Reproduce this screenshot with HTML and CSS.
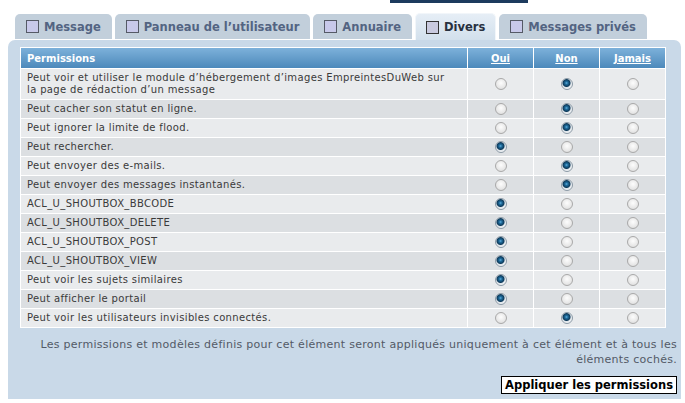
FILE: index.html
```html
<!DOCTYPE html>
<html lang="fr">
<head>
  <meta charset="UTF-8">
  <title>Permissions</title>
  <link rel="stylesheet" href="styles.css">
</head>
<body>
  <div class="topbar"></div>
  <ul class="tabs">
    <li class="tab"><span class="box"></span>Message</li>
    <li class="tab"><span class="box"></span>Panneau de l’utilisateur</li>
    <li class="tab"><span class="box"></span>Annuaire</li>
    <li class="tab active"><span class="box"></span>Divers</li>
    <li class="tab"><span class="box"></span>Messages privés</li>
  </ul>
  <div class="panel">
    <table class="perms">
      <thead>
        <tr>
          <th class="name">Permissions</th>
          <th><a href="#">Oui</a></th>
          <th><a href="#">Non</a></th>
          <th><a href="#">Jamais</a></th>
        </tr>
      </thead>
      <tbody>
        <tr class="row1">
          <td class="name">Peut voir et utiliser le module d’hébergement d’images EmpreintesDuWeb sur la page de rédaction d’un message</td>
          <td><input type="radio" name="p1"></td>
          <td><input type="radio" name="p1" checked></td>
          <td><input type="radio" name="p1"></td>
        </tr>
        <tr class="row2">
          <td class="name">Peut cacher son statut en ligne.</td>
          <td><input type="radio" name="p2"></td>
          <td><input type="radio" name="p2" checked></td>
          <td><input type="radio" name="p2"></td>
        </tr>
        <tr class="row1">
          <td class="name">Peut ignorer la limite de flood.</td>
          <td><input type="radio" name="p3"></td>
          <td><input type="radio" name="p3" checked></td>
          <td><input type="radio" name="p3"></td>
        </tr>
        <tr class="row2">
          <td class="name">Peut rechercher.</td>
          <td><input type="radio" name="p4" checked></td>
          <td><input type="radio" name="p4"></td>
          <td><input type="radio" name="p4"></td>
        </tr>
        <tr class="row1">
          <td class="name">Peut envoyer des e-mails.</td>
          <td><input type="radio" name="p5"></td>
          <td><input type="radio" name="p5" checked></td>
          <td><input type="radio" name="p5"></td>
        </tr>
        <tr class="row2">
          <td class="name">Peut envoyer des messages instantanés.</td>
          <td><input type="radio" name="p6"></td>
          <td><input type="radio" name="p6" checked></td>
          <td><input type="radio" name="p6"></td>
        </tr>
        <tr class="row1">
          <td class="name">ACL_U_SHOUTBOX_BBCODE</td>
          <td><input type="radio" name="p7" checked></td>
          <td><input type="radio" name="p7"></td>
          <td><input type="radio" name="p7"></td>
        </tr>
        <tr class="row2">
          <td class="name">ACL_U_SHOUTBOX_DELETE</td>
          <td><input type="radio" name="p8" checked></td>
          <td><input type="radio" name="p8"></td>
          <td><input type="radio" name="p8"></td>
        </tr>
        <tr class="row1">
          <td class="name">ACL_U_SHOUTBOX_POST</td>
          <td><input type="radio" name="p9" checked></td>
          <td><input type="radio" name="p9"></td>
          <td><input type="radio" name="p9"></td>
        </tr>
        <tr class="row2">
          <td class="name">ACL_U_SHOUTBOX_VIEW</td>
          <td><input type="radio" name="p10" checked></td>
          <td><input type="radio" name="p10"></td>
          <td><input type="radio" name="p10"></td>
        </tr>
        <tr class="row1">
          <td class="name">Peut voir les sujets similaires</td>
          <td><input type="radio" name="p11" checked></td>
          <td><input type="radio" name="p11"></td>
          <td><input type="radio" name="p11"></td>
        </tr>
        <tr class="row2">
          <td class="name">Peut afficher le portail</td>
          <td><input type="radio" name="p12" checked></td>
          <td><input type="radio" name="p12"></td>
          <td><input type="radio" name="p12"></td>
        </tr>
        <tr class="row1">
          <td class="name">Peut voir les utilisateurs invisibles connectés.</td>
          <td><input type="radio" name="p13"></td>
          <td><input type="radio" name="p13" checked></td>
          <td><input type="radio" name="p13"></td>
        </tr>
      </tbody>
    </table>
    <p class="note">Les permissions et modèles définis pour cet élément seront appliqués uniquement à cet élément et à tous les éléments cochés.</p>
    <div class="actions">
      <button class="apply">Appliquer les permissions</button>
    </div>
  </div>
</body>
</html>
```

FILE: styles.css
```css
body {
  margin: 0;
  background: #fff;
  font-family: "DejaVu Sans", Verdana, sans-serif;
  color: #333;
}
.topbar {
  margin-left: 390px;
  width: 138px;
  height: 3px;
  background: #1d3b5e;
}
.tabs {
  list-style: none;
  margin: 11px 0 0 15px;
  padding: 0;
  display: flex;
  gap: 3px;
  height: 26px;
}
.tab {
  display: flex;
  align-items: center;
  gap: 5px;
  height: 25px;
  padding: 0 11px;
  box-sizing: border-box;
  background: #c2cfdb;
  border-radius: 5px 5px 0 0;
  font-size: 11.5px;
  font-weight: bold;
  color: #536482;
}
.tab.active {
  height: 27px;
  margin-top: -1px;
  background: linear-gradient(#e6eef6, #d2e0ec);
  border: 1px solid #f2f6fa;
  border-bottom: none;
  padding: 0 10px;
  color: #28313f;
  position: relative;
  z-index: 1;
}
.box {
  width: 11px;
  height: 11px;
  border: 1px solid #555a66;
  background: #c8c9ea;
}
.tab.active .box {
  background: #c9cadf;
  border-color: #333;
}
.panel {
  margin-left: 8px;
  width: 673px;
  height: 359px;
  box-sizing: border-box;
  padding: 7px 4px 0 12px;
  background: #c9d9e8;
  border-radius: 7px 7px 0 0;
}
.perms {
  width: 646px;
  border-collapse: separate;
  border-spacing: 1px;
  background: #fff;
  font-size: 10px;
  table-layout: fixed;
}
.perms th {
  height: 20px;
  padding: 0 6px;
  background: linear-gradient(#7db1da, #4c89bb);
  color: #fff;
  font-weight: bold;
  text-align: center;
  width: 53px;
}
.perms th.name {
  width: auto;
  text-align: left;
}
.perms th a {
  color: #fff;
}
.perms td {
  padding: 3px 6px;
  line-height: 12px;
  text-align: center;
  vertical-align: middle;
  color: #3a3a3a;
}
.perms td.name {
  text-align: left;
  letter-spacing: 0.35px;
  padding-right: 20px;
}
.row1 td {
  background: #e9ebed;
}
.row2 td {
  background: #dcdfe2;
}
.perms input {
  appearance: none;
  -webkit-appearance: none;
  display: block;
  margin: 0 auto;
  width: 12px;
  height: 12px;
  border-radius: 50%;
  border: 1px solid #a9a9a9;
  background: radial-gradient(circle at 50% 40%, #fdfdfd, #e4e4e4 70%, #d0d0d0);
}
.perms input:checked {
  border-color: #8c9aa6;
  background: radial-gradient(circle at 45% 40%, #5fb0de 0, #1e6a9a 1.5px, #0e3a5a 3.5px, #dfe5ea 4.5px, #f4f6f8 6px);
}
.note {
  margin: 9px 0 0;
  padding-left: 20px;
  text-align: right;
  font-size: 11px;
  letter-spacing: 0.28px;
  line-height: 15px;
  color: #535a66;
}
.actions {
  display: flex;
  justify-content: flex-end;
  margin-top: 9px;
}
.apply {
  font-family: "DejaVu Sans", Verdana, sans-serif;
  font-size: 11.5px;
  font-weight: bold;
  color: #000;
  background: #fff;
  border: 1px solid #000;
  padding: 1px 3px;
  height: 18px;
  border-radius: 0;
}
```
